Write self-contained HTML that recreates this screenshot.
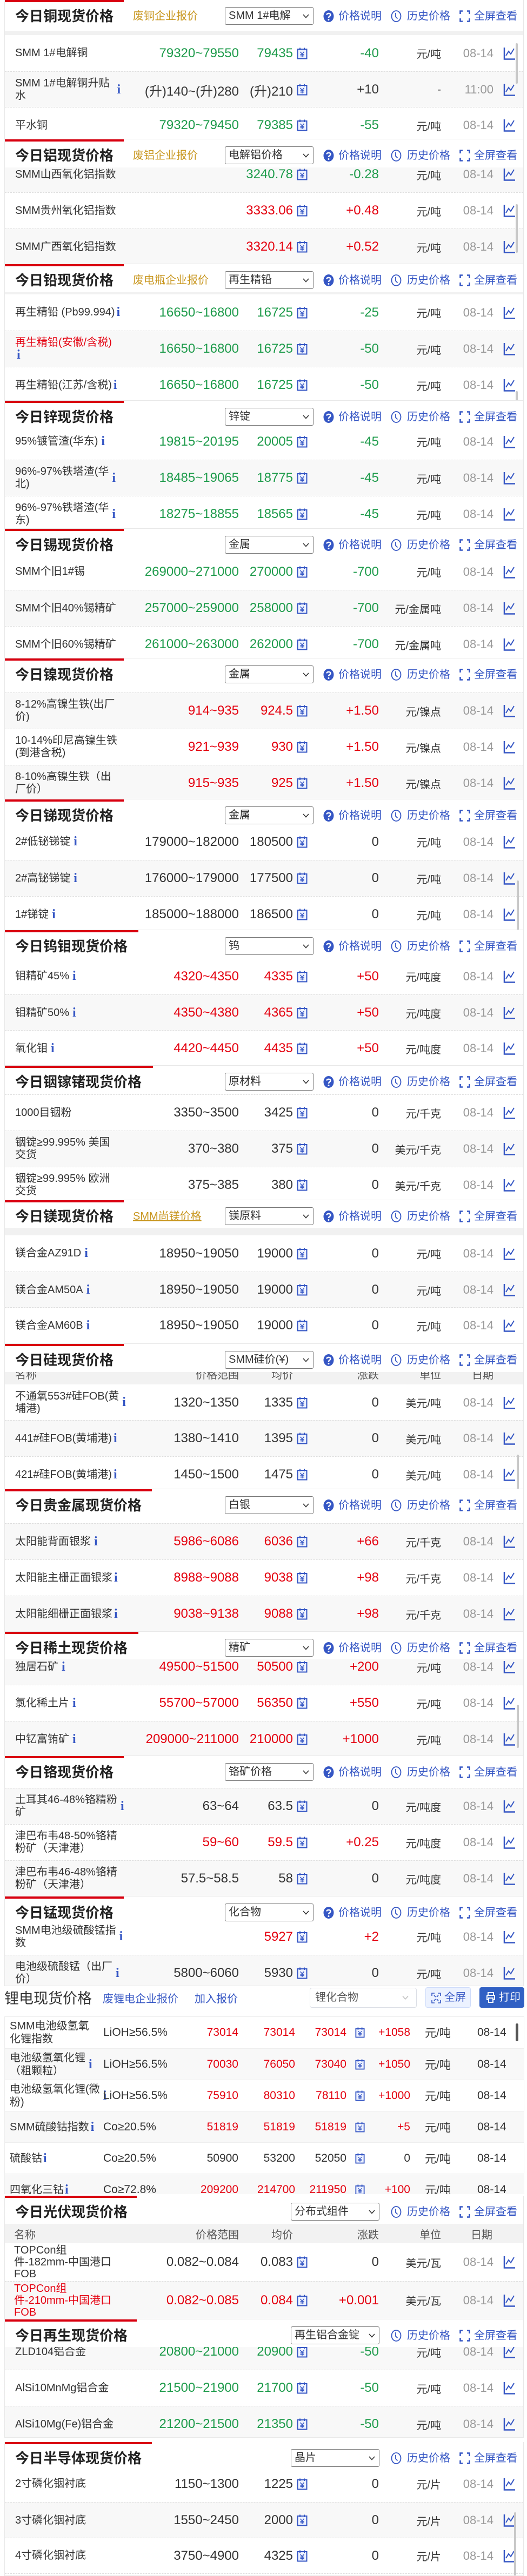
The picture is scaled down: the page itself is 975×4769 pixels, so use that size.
<!DOCTYPE html>
<html><head><meta charset="utf-8">
<style>
*{box-sizing:border-box;margin:0;padding:0}
html,body{width:975px;height:4769px;background:#fff;overflow:hidden}
body{position:relative;font-family:"Liberation Sans","Noto Sans CJK SC",sans-serif;color:#333;font-size:20px}
.sec{position:absolute;left:8px;width:961px;overflow:hidden;border:1px solid #e8e8e8;border-top:none;background:#fff}
.hd{position:absolute;left:0;top:0;width:100%;background:#fff;z-index:5}
.red{position:absolute;left:0;top:0;height:4px;width:220px;background:#d9000f}
.tt{position:absolute;left:19px;top:14px;font-size:26px;line-height:32px;font-weight:bold;color:#222;white-space:nowrap}
.sub{position:absolute;left:237px;top:15px;font-size:20px;line-height:30px;color:#c8961e;white-space:nowrap}
.sel{position:absolute;left:407px;top:13px;width:164px;height:33px;border:1px solid #777;border-radius:3px;font-size:20px;line-height:31px;padding-left:6px;white-space:nowrap;overflow:hidden;background:#fff}
.sel svg{position:absolute;right:7px;top:12px}
.ic{position:absolute;top:19px}
.lt{position:absolute;top:15px;font-size:20px;line-height:30px;color:#3556c4;white-space:nowrap}
.band{position:absolute;left:0;width:100%;background:#f1f1f1;z-index:4}
.r{position:absolute;left:0;width:100%;height:67px;border-top:1px dashed #ddd}
.g{background:#f8f8f8}
.r>div{position:absolute;top:0;height:100%;display:flex;align-items:center;white-space:nowrap}
.n{left:19px;line-height:23px;font-size:20px}
.rg{left:0;width:433px;justify-content:flex-end;font-size:24px}
.av{left:0;width:533px;justify-content:flex-end;font-size:24px}
.ci{left:540px}
.ch{left:0;width:692px;justify-content:flex-end;font-size:24px}
.un{left:0;width:807px;justify-content:flex-end;font-size:20px}
.dt{left:0;width:904px;justify-content:flex-end;color:#999;font-size:22px}
.ct{left:922px}
.gr{color:#1e9b4b}.rd{color:#e4000f}
.i{font-family:"Liberation Serif",serif;font-weight:bold;color:#3556c4;font-size:24px;margin-left:6px}
.th{position:absolute;left:0;width:100%;background:#f2f2f2;color:#555;font-size:20px}
.th span{position:absolute;top:0;height:100%;display:flex;align-items:center;justify-content:flex-end}
.sb{position:absolute;width:4px;background:#c8c8c8;border-radius:2px;z-index:6}
.lr{position:absolute;left:0;width:100%;height:58px;border-top:1px solid #eee}
.lr>div{position:absolute;top:0;height:100%;display:flex;align-items:center;white-space:nowrap;font-size:21px}
.ln{left:9px;line-height:24px;font-size:20px!important}
.ls{left:182px}
.l1{left:0;width:432px;justify-content:flex-end}
.l2{left:0;width:537px;justify-content:flex-end}
.l3{left:0;width:632px;justify-content:flex-end}
.li{left:648px}
.lc{left:0;width:750px;justify-content:flex-end}
.lu{left:777px}
.ld{left:874px}
</style></head><body>
<svg width="0" height="0" style="position:absolute">
<defs>
<symbol id="cal" viewBox="0 0 20 22"><rect x="1.5" y="3" width="17" height="17.5" fill="#eef2ff" stroke="#3556c4" stroke-width="2"/><path d="M6 0.5V5M14 0.5V5" stroke="#3556c4" stroke-width="2"/><path d="M6.5 8L10 12L13.5 8M10 12V18M6.5 13H13.5M6.5 15.5H13.5" stroke="#3556c4" stroke-width="1.5" fill="none"/></symbol>
<symbol id="chart" viewBox="0 0 22 24"><path d="M2 1V22.5H22" stroke="#3556c4" stroke-width="2.5" fill="none"/><path d="M5 16L10 8L14 13L20 3" stroke="#3556c4" stroke-width="2" fill="none"/></symbol>
<symbol id="q" viewBox="0 0 20 22"><ellipse cx="10" cy="11" rx="9.5" ry="11" fill="#3556c4"/><path d="M6.5 8.5C6.5 5 13.5 5 13.5 8.5C13.5 11 10 11 10 14" stroke="#fff" stroke-width="2.4" fill="none"/><circle cx="10" cy="17.5" r="1.5" fill="#fff"/></symbol>
<symbol id="clk" viewBox="0 0 20 22"><ellipse cx="10" cy="11" rx="8.5" ry="10" fill="none" stroke="#3556c4" stroke-width="1.8"/><path d="M9 5V12L12.5 15.5" stroke="#3556c4" stroke-width="1.8" fill="none"/></symbol>
<symbol id="fs" viewBox="0 0 20 22"><path d="M1.5 7V1.5H6M14 1.5H18.5V7M18.5 15V20.5H14M6 20.5H1.5V15" fill="none" stroke="#3556c4" stroke-width="2.6"/></symbol>
<symbol id="cv" viewBox="0 0 12 8"><path d="M1 1L6 6.5L11 1" stroke="#333" stroke-width="1.6" fill="none"/></symbol>
</defs></svg>

<!-- 1 Copper -->
<div class="sec" style="top:0;height:258px">
<div class="hd" style="height:57px"><div class="red"></div><div class="tt">今日铜现货价格</div><div class="sub">废铜企业报价</div><div class="sel">SMM 1#电解<svg width="12" height="8"><use href="#cv"/></svg></div>
<svg class="ic" style="left:589px" width="20" height="22"><use href="#q"/></svg><span class="lt" style="left:617px">价格说明</span><svg class="ic" style="left:714px" width="20" height="22"><use href="#clk"/></svg><span class="lt" style="left:744px">历史价格</span><svg class="ic" style="left:841px" width="20" height="22"><use href="#fs"/></svg><span class="lt" style="left:868px">全屏查看</span></div>
<div class="band" style="top:57px;height:8px"></div>
<div class="sb" style="left:945px;top:80px;height:75px"></div>
<div class="r" style="top:65px;border-top:none"><div class="n">SMM 1#电解铜</div><div class="rg gr">79320~79550</div><div class="av gr">79435</div><div class="ci"><svg width="20" height="22"><use href="#cal"/></svg></div><div class="ch gr">-40</div><div class="un">元/吨</div><div class="dt">08-14</div><div class="ct"><svg width="22" height="24"><use href="#chart"/></svg></div></div>
<div class="r g" style="top:132px"><div class="n">SMM 1#电解铜升贴<br>水<b class="i" style="margin-left:14px">i</b></div><div class="rg">(升)140~(升)280</div><div class="av">(升)210</div><div class="ci"><svg width="20" height="22"><use href="#cal"/></svg></div><div class="ch">+10</div><div class="un">-</div><div class="dt">11:00</div><div class="ct"><svg width="22" height="24"><use href="#chart"/></svg></div></div>
<div class="r" style="top:198px"><div class="n">平水铜</div><div class="rg gr">79320~79450</div><div class="av gr">79385</div><div class="ci"><svg width="20" height="22"><use href="#cal"/></svg></div><div class="ch gr">-55</div><div class="un">元/吨</div><div class="dt">08-14</div><div class="ct"><svg width="22" height="24"><use href="#chart"/></svg></div></div>
</div>

<!-- 2 Aluminum -->
<div class="sec" style="top:258px;height:231px">
<div class="hd" style="height:52px"><div class="red"></div><div class="tt">今日铝现货价格</div><div class="sub">废铝企业报价</div><div class="sel">电解铝价格<svg width="12" height="8"><use href="#cv"/></svg></div>
<svg class="ic" style="left:589px" width="20" height="22"><use href="#q"/></svg><span class="lt" style="left:617px">价格说明</span><svg class="ic" style="left:714px" width="20" height="22"><use href="#clk"/></svg><span class="lt" style="left:744px">历史价格</span><svg class="ic" style="left:841px" width="20" height="22"><use href="#fs"/></svg><span class="lt" style="left:868px">全屏查看</span></div>
<div class="sb" style="left:945px;top:120px;height:90px"></div>
<div class="r g" style="top:31px"><div class="n">SMM山西氧化铝指数</div><div class="av gr">3240.78</div><div class="ci"><svg width="20" height="22"><use href="#cal"/></svg></div><div class="ch gr">-0.28</div><div class="un">元/吨</div><div class="dt">08-14</div><div class="ct"><svg width="22" height="24"><use href="#chart"/></svg></div></div>
<div class="r" style="top:98px"><div class="n">SMM贵州氧化铝指数</div><div class="av rd">3333.06</div><div class="ci"><svg width="20" height="22"><use href="#cal"/></svg></div><div class="ch rd">+0.48</div><div class="un">元/吨</div><div class="dt">08-14</div><div class="ct"><svg width="22" height="24"><use href="#chart"/></svg></div></div>
<div class="r g" style="top:165px"><div class="n">SMM广西氧化铝指数</div><div class="av rd">3320.14</div><div class="ci"><svg width="20" height="22"><use href="#cal"/></svg></div><div class="ch rd">+0.52</div><div class="un">元/吨</div><div class="dt">08-14</div><div class="ct"><svg width="22" height="24"><use href="#chart"/></svg></div></div>
</div>

<!-- 3 Lead -->
<div class="sec" style="top:489px;height:253px">
<div class="hd" style="height:52px"><div class="red"></div><div class="tt">今日铅现货价格</div><div class="sub">废电瓶企业报价</div><div class="sel">再生精铅<svg width="12" height="8"><use href="#cv"/></svg></div>
<svg class="ic" style="left:589px" width="20" height="22"><use href="#q"/></svg><span class="lt" style="left:617px">价格说明</span><svg class="ic" style="left:714px" width="20" height="22"><use href="#clk"/></svg><span class="lt" style="left:744px">历史价格</span><svg class="ic" style="left:841px" width="20" height="22"><use href="#fs"/></svg><span class="lt" style="left:868px">全屏查看</span></div>
<div class="band" style="top:52px;height:4px"></div>
<div class="sb" style="left:945px;top:235px;height:20px"></div>
<div class="r" style="top:56px;border-top:none"><div class="n">再生精铅 (Pb99.994)<br><b class="i" style="margin-left:3px">i</b></div><div class="rg gr">16650~16800</div><div class="av gr">16725</div><div class="ci"><svg width="20" height="22"><use href="#cal"/></svg></div><div class="ch gr">-25</div><div class="un">元/吨</div><div class="dt">08-14</div><div class="ct"><svg width="22" height="24"><use href="#chart"/></svg></div></div>
<div class="r g" style="top:123px"><div class="n"><span><span class="rd">再生精铅(安徽/含税)</span><br><b class="i" style="margin-left:3px">i</b></span></div><div class="rg gr">16650~16800</div><div class="av gr">16725</div><div class="ci"><svg width="20" height="22"><use href="#cal"/></svg></div><div class="ch gr">-50</div><div class="un">元/吨</div><div class="dt">08-14</div><div class="ct"><svg width="22" height="24"><use href="#chart"/></svg></div></div>
<div class="r" style="top:190px"><div class="n">再生精铅(江苏/含税)<br><b class="i" style="margin-left:3px">i</b></div><div class="rg gr">16650~16800</div><div class="av gr">16725</div><div class="ci"><svg width="20" height="22"><use href="#cal"/></svg></div><div class="ch gr">-50</div><div class="un">元/吨</div><div class="dt">08-14</div><div class="ct"><svg width="22" height="24"><use href="#chart"/></svg></div></div>
</div>

<!-- 4 Zinc -->
<div class="sec" style="top:742px;height:237px">
<div class="hd" style="height:48px"><div class="red"></div><div class="tt">今日锌现货价格</div><div class="sel">锌锭<svg width="12" height="8"><use href="#cv"/></svg></div>
<svg class="ic" style="left:589px" width="20" height="22"><use href="#q"/></svg><span class="lt" style="left:617px">价格说明</span><svg class="ic" style="left:714px" width="20" height="22"><use href="#clk"/></svg><span class="lt" style="left:744px">历史价格</span><svg class="ic" style="left:841px" width="20" height="22"><use href="#fs"/></svg><span class="lt" style="left:868px">全屏查看</span></div>
<div class="r" style="top:42px;border-top:none"><div class="n">95%镀管渣(华东)<b class="i">i</b></div><div class="rg gr">19815~20195</div><div class="av gr">20005</div><div class="ci"><svg width="20" height="22"><use href="#cal"/></svg></div><div class="ch gr">-45</div><div class="un">元/吨</div><div class="dt">08-14</div><div class="ct"><svg width="22" height="24"><use href="#chart"/></svg></div></div>
<div class="r g" style="top:109px"><div class="n">96%-97%铁塔渣(华<br>北)<b class="i">i</b></div><div class="rg gr">18485~19065</div><div class="av gr">18775</div><div class="ci"><svg width="20" height="22"><use href="#cal"/></svg></div><div class="ch gr">-45</div><div class="un">元/吨</div><div class="dt">08-14</div><div class="ct"><svg width="22" height="24"><use href="#chart"/></svg></div></div>
<div class="r" style="top:176px"><div class="n">96%-97%铁塔渣(华<br>东)<b class="i">i</b></div><div class="rg gr">18275~18855</div><div class="av gr">18565</div><div class="ci"><svg width="20" height="22"><use href="#cal"/></svg></div><div class="ch gr">-45</div><div class="un">元/吨</div><div class="dt">08-14</div><div class="ct"><svg width="22" height="24"><use href="#chart"/></svg></div></div>
</div>

<!-- 5 Tin -->
<div class="sec" style="top:979px;height:240px">
<div class="hd" style="height:51px"><div class="red"></div><div class="tt">今日锡现货价格</div><div class="sel">金属<svg width="12" height="8"><use href="#cv"/></svg></div>
<svg class="ic" style="left:589px" width="20" height="22"><use href="#q"/></svg><span class="lt" style="left:617px">价格说明</span><svg class="ic" style="left:714px" width="20" height="22"><use href="#clk"/></svg><span class="lt" style="left:744px">历史价格</span><svg class="ic" style="left:841px" width="20" height="22"><use href="#fs"/></svg><span class="lt" style="left:868px">全屏查看</span></div>
<div class="r" style="top:46px;border-top:none"><div class="n">SMM个旧1#锡</div><div class="rg gr">269000~271000</div><div class="av gr">270000</div><div class="ci"><svg width="20" height="22"><use href="#cal"/></svg></div><div class="ch gr">-700</div><div class="un">元/吨</div><div class="dt">08-14</div><div class="ct"><svg width="22" height="24"><use href="#chart"/></svg></div></div>
<div class="r g" style="top:113px"><div class="n">SMM个旧40%锡精矿</div><div class="rg gr">257000~259000</div><div class="av gr">258000</div><div class="ci"><svg width="20" height="22"><use href="#cal"/></svg></div><div class="ch gr">-700</div><div class="un">元/金属吨</div><div class="dt">08-14</div><div class="ct"><svg width="22" height="24"><use href="#chart"/></svg></div></div>
<div class="r" style="top:180px"><div class="n">SMM个旧60%锡精矿</div><div class="rg gr">261000~263000</div><div class="av gr">262000</div><div class="ci"><svg width="20" height="22"><use href="#cal"/></svg></div><div class="ch gr">-700</div><div class="un">元/金属吨</div><div class="dt">08-14</div><div class="ct"><svg width="22" height="24"><use href="#chart"/></svg></div></div>
</div>

<!-- 6 Nickel -->
<div class="sec" style="top:1219px;height:261px">
<div class="hd" style="height:63px"><div class="red"></div><div class="tt">今日镍现货价格</div><div class="sel">金属<svg width="12" height="8"><use href="#cv"/></svg></div>
<svg class="ic" style="left:589px" width="20" height="22"><use href="#q"/></svg><span class="lt" style="left:617px">价格说明</span><svg class="ic" style="left:714px" width="20" height="22"><use href="#clk"/></svg><span class="lt" style="left:744px">历史价格</span><svg class="ic" style="left:841px" width="20" height="22"><use href="#fs"/></svg><span class="lt" style="left:868px">全屏查看</span></div>
<div class="r g" style="top:63px"><div class="n">8-12%高镍生铁(出厂<br>价)</div><div class="rg rd">914~935</div><div class="av rd">924.5</div><div class="ci"><svg width="20" height="22"><use href="#cal"/></svg></div><div class="ch rd">+1.50</div><div class="un">元/镍点</div><div class="dt">08-14</div><div class="ct"><svg width="22" height="24"><use href="#chart"/></svg></div></div>
<div class="r" style="top:130px"><div class="n">10-14%印尼高镍生铁<br>(到港含税)</div><div class="rg rd">921~939</div><div class="av rd">930</div><div class="ci"><svg width="20" height="22"><use href="#cal"/></svg></div><div class="ch rd">+1.50</div><div class="un">元/镍点</div><div class="dt">08-14</div><div class="ct"><svg width="22" height="24"><use href="#chart"/></svg></div></div>
<div class="r g" style="top:197px"><div class="n">8-10%高镍生铁（出<br>厂价）</div><div class="rg rd">915~935</div><div class="av rd">925</div><div class="ci"><svg width="20" height="22"><use href="#cal"/></svg></div><div class="ch rd">+1.50</div><div class="un">元/镍点</div><div class="dt">08-14</div><div class="ct"><svg width="22" height="24"><use href="#chart"/></svg></div></div>
</div>

<!-- 7 Antimony -->
<div class="sec" style="top:1480px;height:242px">
<div class="hd" style="height:52px"><div class="red"></div><div class="tt">今日锑现货价格</div><div class="sel">金属<svg width="12" height="8"><use href="#cv"/></svg></div>
<svg class="ic" style="left:589px" width="20" height="22"><use href="#q"/></svg><span class="lt" style="left:617px">价格说明</span><svg class="ic" style="left:714px" width="20" height="22"><use href="#clk"/></svg><span class="lt" style="left:744px">历史价格</span><svg class="ic" style="left:841px" width="20" height="22"><use href="#fs"/></svg><span class="lt" style="left:868px">全屏查看</span></div>
<div class="sb" style="left:947px;top:150px;height:92px"></div>
<div class="r" style="top:45px;border-top:none"><div class="n">2#低铋锑锭<b class="i">i</b></div><div class="rg">179000~182000</div><div class="av">180500</div><div class="ci"><svg width="20" height="22"><use href="#cal"/></svg></div><div class="ch">0</div><div class="un">元/吨</div><div class="dt">08-14</div><div class="ct"><svg width="22" height="24"><use href="#chart"/></svg></div></div>
<div class="r g" style="top:112px"><div class="n">2#高铋锑锭<b class="i">i</b></div><div class="rg">176000~179000</div><div class="av">177500</div><div class="ci"><svg width="20" height="22"><use href="#cal"/></svg></div><div class="ch">0</div><div class="un">元/吨</div><div class="dt">08-14</div><div class="ct"><svg width="22" height="24"><use href="#chart"/></svg></div></div>
<div class="r" style="top:179px"><div class="n">1#锑锭<b class="i">i</b></div><div class="rg">185000~188000</div><div class="av">186500</div><div class="ci"><svg width="20" height="22"><use href="#cal"/></svg></div><div class="ch">0</div><div class="un">元/吨</div><div class="dt">08-14</div><div class="ct"><svg width="22" height="24"><use href="#chart"/></svg></div></div>
</div>

<!-- 8 W Mo -->
<div class="sec" style="top:1722px;height:251px">
<div class="hd" style="height:52px"><div class="red" style="width:247px"></div><div class="tt">今日钨钼现货价格</div><div class="sel">钨<svg width="12" height="8"><use href="#cv"/></svg></div>
<svg class="ic" style="left:589px" width="20" height="22"><use href="#q"/></svg><span class="lt" style="left:617px">价格说明</span><svg class="ic" style="left:714px" width="20" height="22"><use href="#clk"/></svg><span class="lt" style="left:744px">历史价格</span><svg class="ic" style="left:841px" width="20" height="22"><use href="#fs"/></svg><span class="lt" style="left:868px">全屏查看</span></div>
<div class="r" style="top:52px;border-top:none"><div class="n">钼精矿45%<b class="i">i</b></div><div class="rg rd">4320~4350</div><div class="av rd">4335</div><div class="ci"><svg width="20" height="22"><use href="#cal"/></svg></div><div class="ch rd">+50</div><div class="un">元/吨度</div><div class="dt">08-14</div><div class="ct"><svg width="22" height="24"><use href="#chart"/></svg></div></div>
<div class="r g" style="top:119px"><div class="n">钼精矿50%<b class="i">i</b></div><div class="rg rd">4350~4380</div><div class="av rd">4365</div><div class="ci"><svg width="20" height="22"><use href="#cal"/></svg></div><div class="ch rd">+50</div><div class="un">元/吨度</div><div class="dt">08-14</div><div class="ct"><svg width="22" height="24"><use href="#chart"/></svg></div></div>
<div class="r" style="top:185px"><div class="n">氧化钼<b class="i">i</b></div><div class="rg rd">4420~4450</div><div class="av rd">4435</div><div class="ci"><svg width="20" height="22"><use href="#cal"/></svg></div><div class="ch rd">+50</div><div class="un">元/吨度</div><div class="dt">08-14</div><div class="ct"><svg width="22" height="24"><use href="#chart"/></svg></div></div>
</div>

<!-- 9 In Ga Ge -->
<div class="sec" style="top:1973px;height:249px">
<div class="hd" style="height:52px"><div class="red" style="width:274px"></div><div class="tt">今日铟镓锗现货价格</div><div class="sel">原材料<svg width="12" height="8"><use href="#cv"/></svg></div>
<svg class="ic" style="left:589px" width="20" height="22"><use href="#q"/></svg><span class="lt" style="left:617px">价格说明</span><svg class="ic" style="left:714px" width="20" height="22"><use href="#clk"/></svg><span class="lt" style="left:744px">历史价格</span><svg class="ic" style="left:841px" width="20" height="22"><use href="#fs"/></svg><span class="lt" style="left:868px">全屏查看</span></div>
<div class="r" style="top:53px"><div class="n">1000目铟粉</div><div class="rg">3350~3500</div><div class="av">3425</div><div class="ci"><svg width="20" height="22"><use href="#cal"/></svg></div><div class="ch">0</div><div class="un">元/千克</div><div class="dt">08-14</div><div class="ct"><svg width="22" height="24"><use href="#chart"/></svg></div></div>
<div class="r g" style="top:120px"><div class="n">铟锭≥99.995% 美国<br>交货</div><div class="rg">370~380</div><div class="av">375</div><div class="ci"><svg width="20" height="22"><use href="#cal"/></svg></div><div class="ch">0</div><div class="un">美元/千克</div><div class="dt">08-14</div><div class="ct"><svg width="22" height="24"><use href="#chart"/></svg></div></div>
<div class="r" style="top:187px"><div class="n">铟锭≥99.995% 欧洲<br>交货</div><div class="rg">375~385</div><div class="av">380</div><div class="ci"><svg width="20" height="22"><use href="#cal"/></svg></div><div class="ch">0</div><div class="un">美元/千克</div><div class="dt">08-14</div><div class="ct"><svg width="22" height="24"><use href="#chart"/></svg></div></div>
</div>

<!-- 10 Mg -->
<div class="sec" style="top:2222px;height:266px">
<div class="hd" style="height:51px"><div class="red"></div><div class="tt">今日镁现货价格</div><div class="sub" style="text-decoration:underline">SMM尚镁价格</div><div class="sel">镁原料<svg width="12" height="8"><use href="#cv"/></svg></div>
<svg class="ic" style="left:589px" width="20" height="22"><use href="#q"/></svg><span class="lt" style="left:617px">价格说明</span><svg class="ic" style="left:714px" width="20" height="22"><use href="#clk"/></svg><span class="lt" style="left:744px">历史价格</span><svg class="ic" style="left:841px" width="20" height="22"><use href="#fs"/></svg><span class="lt" style="left:868px">全屏查看</span></div>
<div class="band" style="top:51px;height:14px"></div>
<div class="r" style="top:65px;border-top:none"><div class="n">镁合金AZ91D<b class="i">i</b></div><div class="rg">18950~19050</div><div class="av">19000</div><div class="ci"><svg width="20" height="22"><use href="#cal"/></svg></div><div class="ch">0</div><div class="un">元/吨</div><div class="dt">08-14</div><div class="ct"><svg width="22" height="24"><use href="#chart"/></svg></div></div>
<div class="r g" style="top:132px"><div class="n">镁合金AM50A<b class="i">i</b></div><div class="rg">18950~19050</div><div class="av">19000</div><div class="ci"><svg width="20" height="22"><use href="#cal"/></svg></div><div class="ch">0</div><div class="un">元/吨</div><div class="dt">08-14</div><div class="ct"><svg width="22" height="24"><use href="#chart"/></svg></div></div>
<div class="r" style="top:198px"><div class="n">镁合金AM60B<b class="i">i</b></div><div class="rg">18950~19050</div><div class="av">19000</div><div class="ci"><svg width="20" height="22"><use href="#cal"/></svg></div><div class="ch">0</div><div class="un">元/吨</div><div class="dt">08-14</div><div class="ct"><svg width="22" height="24"><use href="#chart"/></svg></div></div>
</div>

<!-- 11 Si -->
<div class="sec" style="top:2488px;height:269px">
<div class="hd" style="height:52px"><div class="red"></div><div class="tt">今日硅现货价格</div><div class="sel">SMM硅价(¥)<svg width="12" height="8"><use href="#cv"/></svg></div>
<svg class="ic" style="left:589px" width="20" height="22"><use href="#q"/></svg><span class="lt" style="left:617px">价格说明</span><svg class="ic" style="left:714px" width="20" height="22"><use href="#clk"/></svg><span class="lt" style="left:744px">历史价格</span><svg class="ic" style="left:841px" width="20" height="22"><use href="#fs"/></svg><span class="lt" style="left:868px">全屏查看</span></div>
<div class="th" style="top:36px;height:39px"><span style="left:19px">名称</span><span style="left:0;width:433px">价格范围</span><span style="left:0;width:533px">均价</span><span style="left:0;width:692px">涨跌</span><span style="left:0;width:807px">单位</span><span style="left:0;width:904px">日期</span></div>
<div class="sb" style="left:947px;top:205px;height:64px"></div>
<div class="r" style="top:75px;border-top:none"><div class="n">不通氧553#硅FOB(黄<br>埔港)<b class="i">i</b></div><div class="rg">1320~1350</div><div class="av">1335</div><div class="ci"><svg width="20" height="22"><use href="#cal"/></svg></div><div class="ch">0</div><div class="un">美元/吨</div><div class="dt">08-14</div><div class="ct"><svg width="22" height="24"><use href="#chart"/></svg></div></div>
<div class="r g" style="top:141px"><div class="n">441#硅FOB(黄埔港)<br><b class="i" style="margin-left:3px">i</b></div><div class="rg">1380~1410</div><div class="av">1395</div><div class="ci"><svg width="20" height="22"><use href="#cal"/></svg></div><div class="ch">0</div><div class="un">美元/吨</div><div class="dt">08-14</div><div class="ct"><svg width="22" height="24"><use href="#chart"/></svg></div></div>
<div class="r" style="top:208px"><div class="n">421#硅FOB(黄埔港)<br><b class="i" style="margin-left:3px">i</b></div><div class="rg">1450~1500</div><div class="av">1475</div><div class="ci"><svg width="20" height="22"><use href="#cal"/></svg></div><div class="ch">0</div><div class="un">美元/吨</div><div class="dt">08-14</div><div class="ct"><svg width="22" height="24"><use href="#chart"/></svg></div></div>
</div>

<!-- 12 Precious -->
<div class="sec" style="top:2757px;height:264px">
<div class="hd" style="height:63px"><div class="red" style="width:272px"></div><div class="tt">今日贵金属现货价格</div><div class="sel">白银<svg width="12" height="8"><use href="#cv"/></svg></div>
<svg class="ic" style="left:589px" width="20" height="22"><use href="#q"/></svg><span class="lt" style="left:617px">价格说明</span><svg class="ic" style="left:714px" width="20" height="22"><use href="#clk"/></svg><span class="lt" style="left:744px">历史价格</span><svg class="ic" style="left:841px" width="20" height="22"><use href="#fs"/></svg><span class="lt" style="left:868px">全屏查看</span></div>
<div class="r g" style="top:63px"><div class="n">太阳能背面银浆<b class="i">i</b></div><div class="rg rd">5986~6086</div><div class="av rd">6036</div><div class="ci"><svg width="20" height="22"><use href="#cal"/></svg></div><div class="ch rd">+66</div><div class="un">元/千克</div><div class="dt">08-14</div><div class="ct"><svg width="22" height="24"><use href="#chart"/></svg></div></div>
<div class="r" style="top:130px"><div class="n">太阳能主栅正面银浆<br><b class="i" style="margin-left:3px">i</b></div><div class="rg rd">8988~9088</div><div class="av rd">9038</div><div class="ci"><svg width="20" height="22"><use href="#cal"/></svg></div><div class="ch rd">+98</div><div class="un">元/千克</div><div class="dt">08-14</div><div class="ct"><svg width="22" height="24"><use href="#chart"/></svg></div></div>
<div class="r g" style="top:197px"><div class="n">太阳能细栅正面银浆<br><b class="i" style="margin-left:3px">i</b></div><div class="rg rd">9038~9138</div><div class="av rd">9088</div><div class="ci"><svg width="20" height="22"><use href="#cal"/></svg></div><div class="ch rd">+98</div><div class="un">元/千克</div><div class="dt">08-14</div><div class="ct"><svg width="22" height="24"><use href="#chart"/></svg></div></div>
</div>

<!-- 13 Rare earth -->
<div class="sec" style="top:3021px;height:230px">
<div class="hd" style="height:51px"><div class="red" style="width:247px"></div><div class="tt">今日稀土现货价格</div><div class="sel">精矿<svg width="12" height="8"><use href="#cv"/></svg></div>
<svg class="ic" style="left:589px" width="20" height="22"><use href="#q"/></svg><span class="lt" style="left:617px">价格说明</span><svg class="ic" style="left:714px" width="20" height="22"><use href="#clk"/></svg><span class="lt" style="left:744px">历史价格</span><svg class="ic" style="left:841px" width="20" height="22"><use href="#fs"/></svg><span class="lt" style="left:868px">全屏查看</span></div>
<div class="sb" style="left:947px;top:135px;height:80px"></div>
<div class="r g" style="top:31px"><div class="n">独居石矿<b class="i">i</b></div><div class="rg rd">49500~51500</div><div class="av rd">50500</div><div class="ci"><svg width="20" height="22"><use href="#cal"/></svg></div><div class="ch rd">+200</div><div class="un">元/吨</div><div class="dt">08-14</div><div class="ct"><svg width="22" height="24"><use href="#chart"/></svg></div></div>
<div class="r" style="top:98px"><div class="n">氯化稀土片<b class="i">i</b></div><div class="rg rd">55700~57000</div><div class="av rd">56350</div><div class="ci"><svg width="20" height="22"><use href="#cal"/></svg></div><div class="ch rd">+550</div><div class="un">元/吨</div><div class="dt">08-14</div><div class="ct"><svg width="22" height="24"><use href="#chart"/></svg></div></div>
<div class="r g" style="top:165px"><div class="n">中钇富铕矿<b class="i">i</b></div><div class="rg rd">209000~211000</div><div class="av rd">210000</div><div class="ci"><svg width="20" height="22"><use href="#cal"/></svg></div><div class="ch rd">+1000</div><div class="un">元/吨</div><div class="dt">08-14</div><div class="ct"><svg width="22" height="24"><use href="#chart"/></svg></div></div>
</div>

<!-- 14 Chrome -->
<div class="sec" style="top:3251px;height:260px">
<div class="hd" style="height:59px"><div class="red"></div><div class="tt">今日铬现货价格</div><div class="sel">铬矿价格<svg width="12" height="8"><use href="#cv"/></svg></div>
<svg class="ic" style="left:589px" width="20" height="22"><use href="#q"/></svg><span class="lt" style="left:617px">价格说明</span><svg class="ic" style="left:714px" width="20" height="22"><use href="#clk"/></svg><span class="lt" style="left:744px">历史价格</span><svg class="ic" style="left:841px" width="20" height="22"><use href="#fs"/></svg><span class="lt" style="left:868px">全屏查看</span></div>
<div class="r g" style="top:59px"><div class="n">土耳其46-48%铬精粉<br>矿<b class="i">i</b></div><div class="rg">63~64</div><div class="av">63.5</div><div class="ci"><svg width="20" height="22"><use href="#cal"/></svg></div><div class="ch">0</div><div class="un">元/吨度</div><div class="dt">08-14</div><div class="ct"><svg width="22" height="24"><use href="#chart"/></svg></div></div>
<div class="r" style="top:126px"><div class="n">津巴布韦48-50%铬精<br>粉矿（天津港）</div><div class="rg rd">59~60</div><div class="av rd">59.5</div><div class="ci"><svg width="20" height="22"><use href="#cal"/></svg></div><div class="ch rd">+0.25</div><div class="un">元/吨度</div><div class="dt">08-14</div><div class="ct"><svg width="22" height="24"><use href="#chart"/></svg></div></div>
<div class="r g" style="top:193px"><div class="n">津巴布韦46-48%铬精<br>粉矿（天津港）</div><div class="rg">57.5~58.5</div><div class="av">58</div><div class="ci"><svg width="20" height="22"><use href="#cal"/></svg></div><div class="ch">0</div><div class="un">元/吨度</div><div class="dt">08-14</div><div class="ct"><svg width="22" height="24"><use href="#chart"/></svg></div></div>
</div>

<!-- 15 Mn -->
<div class="sec" style="top:3511px;height:166px">
<div class="hd" style="height:48px"><div class="red"></div><div class="tt">今日锰现货价格</div><div class="sel">化合物<svg width="12" height="8"><use href="#cv"/></svg></div>
<svg class="ic" style="left:589px" width="20" height="22"><use href="#q"/></svg><span class="lt" style="left:617px">价格说明</span><svg class="ic" style="left:714px" width="20" height="22"><use href="#clk"/></svg><span class="lt" style="left:744px">历史价格</span><svg class="ic" style="left:841px" width="20" height="22"><use href="#fs"/></svg><span class="lt" style="left:868px">全屏查看</span></div>
<div class="r" style="top:41px;border-top:none"><div class="n">SMM电池级硫酸锰指<br>数<b class="i">i</b></div><div class="av rd">5927</div><div class="ci"><svg width="20" height="22"><use href="#cal"/></svg></div><div class="ch rd">+2</div><div class="un">元/吨</div><div class="dt">08-14</div><div class="ct"><svg width="22" height="24"><use href="#chart"/></svg></div></div>
<div class="r g" style="top:108px"><div class="n">电池级硫酸锰（出厂<br>价）<b class="i">i</b></div><div class="rg">5800~6060</div><div class="av">5930</div><div class="ci"><svg width="20" height="22"><use href="#cal"/></svg></div><div class="ch">0</div><div class="un">元/吨</div><div class="dt">08-14</div><div class="ct"><svg width="22" height="24"><use href="#chart"/></svg></div></div>
</div>

<!-- 16 Lithium -->
<div style="position:absolute;left:8px;top:3678px;width:962px;height:384px;overflow:hidden;background:#fff">
<div style="position:absolute;left:0;top:4px;font-size:27px;line-height:36px;color:#333">锂电现货价格</div>
<div style="position:absolute;left:182px;top:8px;font-size:20px;line-height:30px;color:#3556c4">废锂电企业报价</div>
<div style="position:absolute;left:352px;top:8px;font-size:20px;line-height:30px;color:#3556c4">加入报价</div>
<div style="position:absolute;left:565px;top:2px;width:198px;height:37px;border:1px solid #dcdfe6;border-radius:4px;font-size:20px;line-height:35px;padding-left:9px;color:#555">锂化合物<svg style="position:absolute;right:14px;top:13px" width="12" height="9" viewBox="0 0 12 8"><path d="M1 1L6 6.5L11 1" stroke="#bbb" stroke-width="1.4" fill="none"/></svg></div>
<div style="position:absolute;left:779px;top:1px;width:84px;height:38px;border:1px solid #cfdcfa;border-radius:4px;background:#ecf2ff;color:#3556c4;font-size:20px;line-height:36px;padding-left:34px"><svg style="position:absolute;left:10px;top:9px" width="18" height="20" viewBox="0 0 18 20"><path d="M1 6V1H6M12 1H17V6M17 14V19H12M6 19H1V14M5 5L8 8M13 5L10 8M5 15L8 12M13 15L10 12" stroke="#3556c4" stroke-width="1.6" fill="none"/></svg>全屏</div>
<div style="position:absolute;left:879px;top:1px;width:83px;height:38px;border-radius:4px;background:#3160c4;color:#fff;font-size:20px;line-height:38px;padding-left:36px"><svg style="position:absolute;left:12px;top:9px" width="18" height="20" viewBox="0 0 18 20"><path d="M4 6V1H14V6M2 6H16V14H13M5 14H2V6M5 11H13V19H5Z" stroke="#fff" stroke-width="2" fill="none"/></svg>打印</div>
<div style="position:absolute;left:0;top:55px;width:962px;height:330px;border:1px solid #eee;border-bottom:none">
<div style="position:absolute;left:945px;top:12px;width:5px;height:33px;background:#555;border-radius:3px;z-index:3"></div>
<div class="lr" style="top:0;border-top:none"><div class="ln">SMM电池级氢氧<br>化锂指数</div><div class="ls">LiOH≥56.5%</div><div class="l1 rd">73014</div><div class="l2 rd">73014</div><div class="l3 rd">73014</div><div class="li"><svg width="18" height="22"><use href="#cal"/></svg></div><div class="lc rd">+1058</div><div class="lu">元/吨</div><div class="ld">08-14</div></div>
<div class="lr g" style="top:58px"><div class="ln">电池级氢氧化锂<br>（粗颗粒）<b class="i">i</b></div><div class="ls">LiOH≥56.5%</div><div class="l1 rd">70030</div><div class="l2 rd">76050</div><div class="l3 rd">73040</div><div class="li"><svg width="18" height="22"><use href="#cal"/></svg></div><div class="lc rd">+1050</div><div class="lu">元/吨</div><div class="ld">08-14</div></div>
<div class="lr" style="top:116px"><div class="ln">电池级氢氧化锂(微<br>粉)<b class="i">i</b></div><div class="ls">LiOH≥56.5%</div><div class="l1 rd">75910</div><div class="l2 rd">80310</div><div class="l3 rd">78110</div><div class="li"><svg width="18" height="22"><use href="#cal"/></svg></div><div class="lc rd">+1000</div><div class="lu">元/吨</div><div class="ld">08-14</div></div>
<div class="lr g" style="top:174px"><div class="ln">SMM硫酸钴指数<br><b class="i" style="margin-left:3px">i</b></div><div class="ls">Co≥20.5%</div><div class="l1 rd">51819</div><div class="l2 rd">51819</div><div class="l3 rd">51819</div><div class="li"><svg width="18" height="22"><use href="#cal"/></svg></div><div class="lc rd">+5</div><div class="lu">元/吨</div><div class="ld">08-14</div></div>
<div class="lr" style="top:232px"><div class="ln">硫酸钴<b class="i" style="margin-left:2px">i</b></div><div class="ls">Co≥20.5%</div><div class="l1">50900</div><div class="l2">53200</div><div class="l3">52050</div><div class="li"><svg width="18" height="22"><use href="#cal"/></svg></div><div class="lc">0</div><div class="lu">元/吨</div><div class="ld">08-14</div></div>
<div class="lr g" style="top:290px"><div class="ln">四氧化三钴<b class="i" style="margin-left:2px">i</b></div><div class="ls">Co≥72.8%</div><div class="l1 rd">209200</div><div class="l2 rd">214700</div><div class="l3 rd">211950</div><div class="li"><svg width="18" height="22"><use href="#cal"/></svg></div><div class="lc rd">+100</div><div class="lu">元/吨</div><div class="ld">08-14</div></div>
</div>
</div>

<!-- 17 PV -->
<div class="sec" style="top:4065px;height:229px">
<div class="hd" style="height:52px"><div class="red" style="width:244px"></div><div class="tt">今日光伏现货价格</div><div class="sel" style="left:529px">分布式组件<svg width="12" height="8"><use href="#cv"/></svg></div>
<svg class="ic" style="left:714px" width="20" height="22"><use href="#clk"/></svg><span class="lt" style="left:744px">历史价格</span><svg class="ic" style="left:841px" width="20" height="22"><use href="#fs"/></svg><span class="lt" style="left:868px">全屏查看</span></div>
<div class="th" style="top:52px;height:36px"><span style="left:17px">名称</span><span style="left:0;width:433px">价格范围</span><span style="left:0;width:533px">均价</span><span style="left:0;width:692px">涨跌</span><span style="left:0;width:807px">单位</span><span style="left:0;width:902px">日期</span></div>
<div class="r" style="top:88px;height:70px;border-top:none"><div class="n" style="left:17px;line-height:22px">TOPCon组<br>件-182mm-中国港口<br>FOB</div><div class="rg">0.082~0.084</div><div class="av">0.083</div><div class="ci"><svg width="20" height="22"><use href="#cal"/></svg></div><div class="ch">0</div><div class="un">美元/瓦</div><div class="dt">08-14</div><div class="ct"><svg width="22" height="24"><use href="#chart"/></svg></div></div>
<div class="r g" style="top:158px;height:70px"><div class="n rd" style="left:17px;line-height:22px">TOPCon组<br>件-210mm-中国港口<br>FOB</div><div class="rg rd">0.082~0.085</div><div class="av rd">0.084</div><div class="ci"><svg width="20" height="22"><use href="#cal"/></svg></div><div class="ch rd">+0.001</div><div class="un">美元/瓦</div><div class="dt">08-14</div><div class="ct"><svg width="22" height="24"><use href="#chart"/></svg></div></div>
</div>

<!-- 18 Recycled -->
<div class="sec" style="top:4294px;height:219px">
<div class="hd" style="height:51px"><div class="red" style="width:244px"></div><div class="tt">今日再生现货价格</div><div class="sel" style="left:529px">再生铝合金锭<svg width="12" height="8"><use href="#cv"/></svg></div>
<svg class="ic" style="left:714px" width="20" height="22"><use href="#clk"/></svg><span class="lt" style="left:744px">历史价格</span><svg class="ic" style="left:841px" width="20" height="22"><use href="#fs"/></svg><span class="lt" style="left:868px">全屏查看</span></div>
<div class="r g" style="top:26px"><div class="n">ZLD104铝合金</div><div class="rg gr">20800~21000</div><div class="av gr">20900</div><div class="ci"><svg width="20" height="22"><use href="#cal"/></svg></div><div class="ch gr">-50</div><div class="un">元/吨</div><div class="dt">08-14</div><div class="ct"><svg width="22" height="24"><use href="#chart"/></svg></div></div>
<div class="r" style="top:93px"><div class="n">AlSi10MnMg铝合金</div><div class="rg gr">21500~21900</div><div class="av gr">21700</div><div class="ci"><svg width="20" height="22"><use href="#cal"/></svg></div><div class="ch gr">-50</div><div class="un">元/吨</div><div class="dt">08-14</div><div class="ct"><svg width="22" height="24"><use href="#chart"/></svg></div></div>
<div class="r g" style="top:160px"><div class="n">AlSi10Mg(Fe)铝合金</div><div class="rg gr">21200~21500</div><div class="av gr">21350</div><div class="ci"><svg width="20" height="22"><use href="#cal"/></svg></div><div class="ch gr">-50</div><div class="un">元/吨</div><div class="dt">08-14</div><div class="ct"><svg width="22" height="24"><use href="#chart"/></svg></div></div>
</div>

<!-- 19 Semiconductor -->
<div class="sec" style="top:4521px;height:248px">
<div class="hd" style="height:52px"><div class="red" style="width:272px"></div><div class="tt">今日半导体现货价格</div><div class="sel" style="left:529px">晶片<svg width="12" height="8"><use href="#cv"/></svg></div>
<svg class="ic" style="left:714px" width="20" height="22"><use href="#clk"/></svg><span class="lt" style="left:744px">历史价格</span><svg class="ic" style="left:841px" width="20" height="22"><use href="#fs"/></svg><span class="lt" style="left:868px">全屏查看</span></div>
<div class="sb" style="left:942px;top:130px;height:118px"></div>
<div class="r" style="top:44px;border-top:none"><div class="n">2寸磷化铟衬底</div><div class="rg">1150~1300</div><div class="av">1225</div><div class="ci"><svg width="20" height="22"><use href="#cal"/></svg></div><div class="ch">0</div><div class="un">元/片</div><div class="dt">08-14</div><div class="ct"><svg width="22" height="24"><use href="#chart"/></svg></div></div>
<div class="r g" style="top:111px"><div class="n">3寸磷化铟衬底</div><div class="rg">1550~2450</div><div class="av">2000</div><div class="ci"><svg width="20" height="22"><use href="#cal"/></svg></div><div class="ch">0</div><div class="un">元/片</div><div class="dt">08-14</div><div class="ct"><svg width="22" height="24"><use href="#chart"/></svg></div></div>
<div class="r" style="top:177px;border-bottom:1px dashed #ddd"><div class="n">4寸磷化铟衬底</div><div class="rg">3750~4900</div><div class="av">4325</div><div class="ci"><svg width="20" height="22"><use href="#cal"/></svg></div><div class="ch">0</div><div class="un">元/片</div><div class="dt">08-14</div><div class="ct"><svg width="22" height="24"><use href="#chart"/></svg></div></div>
</div>

</body></html>
